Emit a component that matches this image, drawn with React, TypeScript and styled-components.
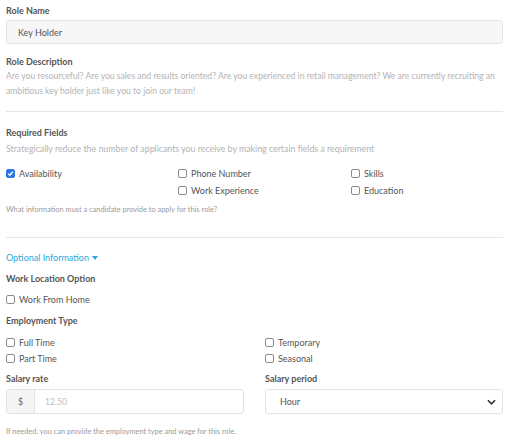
import React from "react";
import styled, { createGlobalStyle } from "styled-components";

const GlobalStyle = createGlobalStyle`
  body {
    margin: 0;
    background: #ffffff;
    font-family: Lato, "Open Sans", sans-serif;
  }
`;

const Page = styled.div`
  width: 497px;
  padding: 5px 11px 0 6px;
`;

const FieldLabel = styled.div<{ $mt?: number }>`
  font-size: 9px;
  line-height: 12px;
  font-weight: 700;
  color: #555555;
  margin-top: ${(p) => p.$mt || 0}px;
`;

const TextInput = styled.div`
  margin-top: 3px;
  height: 24px;
  box-sizing: border-box;
  background: #f7f7f7;
  border: 1px solid #e4e4e4;
  border-radius: 3px;
  padding: 0 11px;
  display: flex;
  align-items: center;
  font-size: 9px;
  color: #555555;
`;

const Muted = styled.p<{ $mt?: number; $size?: number }>`
  margin: ${(p) => p.$mt || 0}px 0 0;
  font-size: ${(p) => p.$size || 8.6}px;
  line-height: 15px;
  color: #b3b3b3;
`;

const Hint = styled.p<{ $mt?: number }>`
  margin: ${(p) => p.$mt || 0}px 0 0;
  font-size: 7.4px;
  line-height: 12px;
  color: #9a9a9a;
`;

const Divider = styled.hr<{ $mt: number }>`
  margin: ${(p) => p.$mt}px 0 0;
  border: none;
  border-top: 1px solid #e6e6e6;
`;

const Toggle = styled.div`
  margin-top: 14px;
  font-size: 9px;
  line-height: 12px;
  color: #2aa7e0;
  display: flex;
  align-items: center;
  gap: 3px;
`;

const Caret = styled.span`
  width: 0;
  height: 0;
  border-left: 3px solid transparent;
  border-right: 3px solid transparent;
  border-top: 4px solid #2aa7e0;
`;

const Grid = styled.div<{ $cols: string; $gap?: number; $mt?: number }>`
  display: grid;
  grid-template-columns: ${(p) => p.$cols};
  column-gap: ${(p) => p.$gap || 0}px;
  margin-top: ${(p) => p.$mt || 0}px;
`;

const Column = styled.div`
  display: flex;
  flex-direction: column;
`;

const CheckRow = styled.label<{ $h?: number }>`
  display: flex;
  align-items: center;
  gap: 4px;
  height: ${(p) => p.$h || 17}px;
  font-size: 9px;
  color: #555555;
`;

const Box = styled.span<{ $on?: boolean }>`
  width: 9px;
  height: 9px;
  box-sizing: border-box;
  border-radius: 2px;
  border: 1px solid ${(p) => (p.$on ? "#2b78e4" : "#8a8a8a")};
  background: ${(p) => (p.$on ? "#2b78e4" : "#fff")};
  display: flex;
  align-items: center;
  justify-content: center;
`;

const InputGroup = styled.div`
  display: flex;
  height: 25px;
  box-sizing: border-box;
  border: 1px solid #e2e2e2;
  border-radius: 3px;
  overflow: hidden;
  margin-top: 4px;
`;

const Addon = styled.div`
  width: 27px;
  background: #f5f5f5;
  border-right: 1px solid #e2e2e2;
  display: flex;
  align-items: center;
  justify-content: center;
  font-size: 9px;
  color: #666;
`;

const Placeholder = styled.div`
  flex: 1;
  display: flex;
  align-items: center;
  padding-left: 10px;
  font-size: 8.6px;
  color: #c0c0c0;
`;

const Select = styled.div`
  margin-top: 4px;
  height: 25px;
  box-sizing: border-box;
  border: 1px solid #e2e2e2;
  border-radius: 3px;
  display: flex;
  align-items: center;
  justify-content: space-between;
  padding: 0 6px 0 14px;
  font-size: 9px;
  color: #555;
`;

const Check = ({ label, on, h }: { label: string; on?: boolean; h?: number }) => (
  <CheckRow $h={h}>
    <Box $on={on}>
      {on && (
        <svg width="7" height="7" viewBox="0 0 8 8">
          <path d="M1.5 4.2 L3.3 6 L6.6 2" fill="none" stroke="#fff" strokeWidth="1.5" />
        </svg>
      )}
    </Box>
    {label}
  </CheckRow>
);

const App = () => (
  <>
    <GlobalStyle />
    <Page>
      <FieldLabel>Role Name</FieldLabel>
      <TextInput>Key Holder</TextInput>

      <FieldLabel $mt={12}>Role Description</FieldLabel>
      <Muted $mt={1}>
        Are you resourceful? Are you sales and results oriented? Are you experienced in retail
        management? We are currently recruiting an ambitious key holder just like you to join our
        team!
      </Muted>

      <Divider $mt={12} />

      <FieldLabel $mt={15}>Required Fields</FieldLabel>
      <Muted $mt={2} $size={8.8}>
        Strategically reduce the number of applicants you receive by making certain fields a
        requirement
      </Muted>

      <Grid $cols="172px 173px 1fr" $mt={9}>
        <Column>
          <Check label="Availability" on />
        </Column>
        <Column>
          <Check label="Phone Number" />
          <Check label="Work Experience" />
        </Column>
        <Column>
          <Check label="Skills" />
          <Check label="Education" />
        </Column>
      </Grid>
      <Hint $mt={5}>What information must a candidate provide to apply for this role?</Hint>

      <Divider $mt={21} />

      <Toggle>
        Optional Information <Caret />
      </Toggle>

      <FieldLabel $mt={9}>Work Location Option</FieldLabel>
      <Grid $cols="1fr" $mt={6}>
        <Check label="Work From Home" />
      </Grid>

      <FieldLabel $mt={7}>Employment Type</FieldLabel>
      <Grid $cols="1fr 1fr" $gap={21} $mt={7}>
        <Column>
          <Check label="Full Time" h={16} />
          <Check label="Part Time" h={16} />
        </Column>
        <Column>
          <Check label="Temporary" h={16} />
          <Check label="Seasonal" h={16} />
        </Column>
      </Grid>

      <Grid $cols="1fr 1fr" $gap={21} $mt={7}>
        <Column>
          <FieldLabel>Salary rate</FieldLabel>
          <InputGroup>
            <Addon>$</Addon>
            <Placeholder>12.50</Placeholder>
          </InputGroup>
        </Column>
        <Column>
          <FieldLabel>Salary period</FieldLabel>
          <Select>
            Hour
            <svg width="9" height="6" viewBox="0 0 10 6">
              <path d="M1 1 L5 5 L9 1" fill="none" stroke="#333" strokeWidth="1.8" />
            </svg>
          </Select>
        </Column>
      </Grid>

      <Hint $mt={12}>If needed, you can provide the employment type and wage for this role.</Hint>
    </Page>
  </>
);

export default App;
